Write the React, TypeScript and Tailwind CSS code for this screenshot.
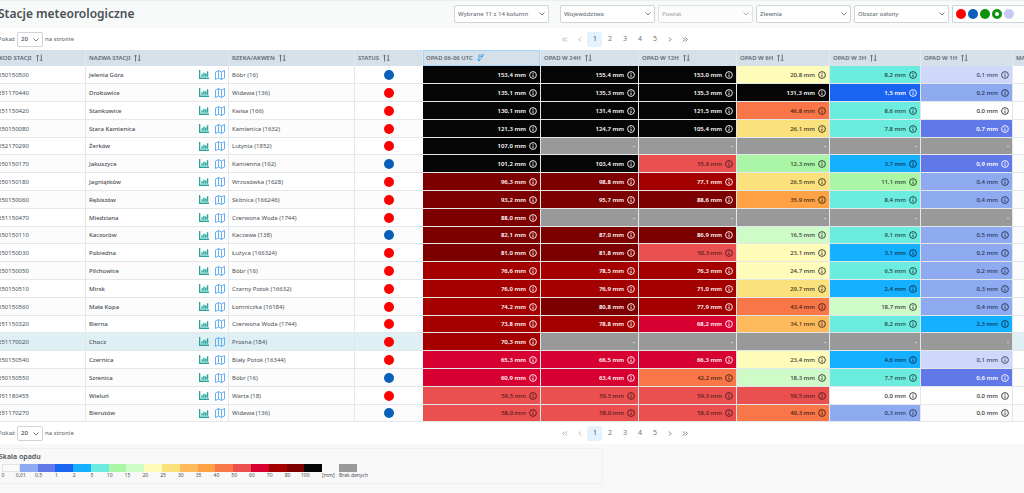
import { useState } from 'react';
import type { ReactNode } from 'react';

type Station = {
  code: string;
  name: string;
  river: string;
  status: 'red' | 'blue';
  values: string[];
};

const stations: Station[] = [
  { code: '250150500', name: 'Jelenia Góra', river: 'Bóbr (16)', status: 'blue', values: ['153,4', '155,4', '153,0', '20,8', '8,2', '0,1'] },
  { code: '251170440', name: 'Drołtowice', river: 'Widawa (136)', status: 'red', values: ['135,1', '135,3', '135,3', '131,3', '1,5', '0,2'] },
  { code: '251150420', name: 'Stankowice', river: 'Kwisa (166)', status: 'red', values: ['130,1', '131,4', '121,5', '46,8', '8,6', '0,0'] },
  { code: '250150080', name: 'Stara Kamienica', river: 'Kamienica (1632)', status: 'red', values: ['121,3', '124,7', '105,4', '26,1', '7,8', '0,7'] },
  { code: '252170290', name: 'Żerków', river: 'Lutynia (1852)', status: 'red', values: ['107,0', '-', '-', '-', '-', '-'] },
  { code: '250150170', name: 'Jakuszyce', river: 'Kamienna (162)', status: 'blue', values: ['101,2', '103,4', '55,6', '12,3', '3,7', '0,9'] },
  { code: '250150180', name: 'Jagniątków', river: 'Wrzosówka (1628)', status: 'red', values: ['96,3', '98,8', '77,1', '26,5', '11,1', '0,4'] },
  { code: '250150060', name: 'Rębiszów', river: 'Skitnica (166246)', status: 'red', values: ['93,2', '95,7', '88,6', '35,9', '8,4', '0,4'] },
  { code: '251150470', name: 'Miedziana', river: 'Czerwona Woda (1744)', status: 'red', values: ['88,0', '-', '-', '-', '-', '-'] },
  { code: '250150110', name: 'Kaczorów', river: 'Kaczawa (138)', status: 'blue', values: ['82,1', '87,0', '86,9', '16,5', '9,1', '0,5'] },
  { code: '250150030', name: 'Pobiedna', river: 'Łużyca (166324)', status: 'red', values: ['81,0', '81,8', '50,3', '23,1', '3,1', '0,2'] },
  { code: '250150050', name: 'Pilchowice', river: 'Bóbr (16)', status: 'red', values: ['76,6', '78,5', '76,3', '24,7', '6,5', '0,2'] },
  { code: '250150510', name: 'Mirsk', river: 'Czarny Potok (16632)', status: 'red', values: ['76,0', '76,9', '71,0', '29,7', '2,4', '0,3'] },
  { code: '250150560', name: 'Mała Kopa', river: 'Łomniczka (16184)', status: 'red', values: ['74,2', '80,8', '77,9', '43,4', '18,7', '0,4'] },
  { code: '251150320', name: 'Bierna', river: 'Czerwona Woda (1744)', status: 'red', values: ['73,8', '78,8', '68,2', '34,1', '8,2', '2,3'] },
  { code: '251170020', name: 'Chocz', river: 'Prosna (184)', status: 'red', values: ['70,3', '-', '-', '-', '-', '-'] },
  { code: '250150540', name: 'Czernica', river: 'Biały Potok (16344)', status: 'red', values: ['65,3', '66,5', '66,3', '23,4', '4,6', '0,1'] },
  { code: '250150550', name: 'Szrenica', river: 'Bóbr (16)', status: 'blue', values: ['60,9', '63,4', '42,2', '18,3', '7,7', '0,6'] },
  { code: '351180455', name: 'Wieluń', river: 'Warta (18)', status: 'red', values: ['59,5', '59,5', '59,5', '59,5', '0,0', '0,0'] },
  { code: '251170270', name: 'Bierutów', river: 'Widawa (136)', status: 'blue', values: ['58,0', '58,0', '58,0', '40,3', '0,3', '0,0'] },
];

// lower bound of each class, highest first
const levels: [number, string][] = [
  [100, 'bg-[#050505] text-white font-semibold'],
  [80, 'bg-[#7d0000] text-white font-semibold'],
  [70, 'bg-[#a40000] text-white font-semibold'],
  [60, 'bg-[#d70030] text-white font-semibold'],
  [50, 'bg-[#eb5050] text-[#551c1c] font-medium'],
  [40, 'bg-[#f87648] text-[#45220f] font-medium'],
  [35, 'bg-[#ffa245] text-[#3a2814] font-medium'],
  [30, 'bg-[#ffba5c] text-[#3a2f1c] font-medium'],
  [25, 'bg-[#fbe17c] text-[#3a3520] font-medium'],
  [20, 'bg-[#fffcb9] text-[#333] font-medium'],
  [15, 'bg-[#cffbc9] text-[#333] font-medium'],
  [10, 'bg-[#aaf5a6] text-[#2c3a2c] font-medium'],
  [5, 'bg-[#6becdf] text-[#1f3b39] font-medium'],
  [2, 'bg-[#15b0ff] text-[#0a2f45] font-medium'],
  [1, 'bg-[#1a64f2] text-white font-semibold'],
  [0.5, 'bg-[#6178e8] text-white font-semibold'],
  [0.15, 'bg-[#8eaaf0] text-[#2b3654] font-medium'],
  [0.01, 'bg-[#ced8fa] text-[#3f4558] font-medium'],
];

function levelClass(value: string, hourly: boolean) {
  if (value === '-') return 'bg-[#999999] text-white font-semibold';
  const n = parseFloat(value.replace(',', '.'));
  if (hourly && n === 0.5) return 'bg-[#8eaaf0] text-[#2b3654] font-medium';
  const level = levels.find(([min]) => n >= min);
  return level ? level[1] : 'text-[#333] font-medium';
}

const scale = [
  { label: '0', color: 'bg-[#fafafa]' },
  { label: '0,01', color: 'bg-[#8eaaf0]' },
  { label: '0,5', color: 'bg-[#6178e8]' },
  { label: '1', color: 'bg-[#1a64f2]' },
  { label: '2', color: 'bg-[#15b0ff]' },
  { label: '5', color: 'bg-[#6becdf]' },
  { label: '10', color: 'bg-[#aaf5a6]' },
  { label: '15', color: 'bg-[#cffbc9]' },
  { label: '20', color: 'bg-[#fffcb9]' },
  { label: '25', color: 'bg-[#fbe17c]' },
  { label: '30', color: 'bg-[#ffba5c]' },
  { label: '35', color: 'bg-[#ffa245]' },
  { label: '40', color: 'bg-[#f87648]' },
  { label: '50', color: 'bg-[#eb5050]' },
  { label: '60', color: 'bg-[#d70030]' },
  { label: '70', color: 'bg-[#a40000]' },
  { label: '80', color: 'bg-[#7d0000]' },
  { label: '100', color: 'bg-[#050505]' },
];

const columns = [
  { label: 'KOD STACJI', width: 'w-[90px]' },
  { label: 'NAZWA STACJI', width: 'w-[143px]' },
  { label: 'RZEKA/AKWEN', width: 'w-[126px]' },
  { label: 'STATUS', width: 'w-[68px]' },
  { label: 'OPAD 06-06 UTC', width: 'w-[118px]', sorted: true },
  { label: 'OPAD W 24H', width: 'w-[98px]' },
  { label: 'OPAD W 12H', width: 'w-[98px]' },
  { label: 'OPAD W 6H', width: 'w-[93px]' },
  { label: 'OPAD W 3H', width: 'w-[91px]' },
  { label: 'OPAD W 1H', width: 'w-[92px]' },
];

function SortIcon() {
  return (
    <svg viewBox="0 0 14 16" className="w-[7px] h-2 shrink-0" fill="none" stroke="currentColor" strokeWidth="1.8">
      <path d="M3 15V2M1 4.5l2-2.5 2.5 2.5M10.5 1v13M8 11.5l2.5 2.5 2.5-2.5" />
    </svg>
  );
}

function SortDescIcon() {
  return (
    <svg viewBox="0 0 14 16" className="w-[7px] h-2 shrink-0 text-[#2196f3]" fill="none" stroke="currentColor" strokeWidth="1.8">
      <path d="M4 1v13M1 11l3 3 3-3M7 2h7M7 5h5M7 8h3" />
    </svg>
  );
}

function ChartIcon() {
  return (
    <svg viewBox="0 0 20 18" className="w-[10px] h-[9px]" fill="currentColor">
      <path d="M0 0h2.6v15H20v3H0zM4.8 8.5h2.8v5H4.8zM8.5 5.5h2.8v8H8.5zM12.1 7h2.8v6.5h-2.8zM15.7 2.5h2.8v11h-2.8z" />
    </svg>
  );
}

function MapIcon() {
  return (
    <svg viewBox="0 0 20 20" className="w-[10px] h-[10px]" fill="none" stroke="currentColor" strokeWidth="2" strokeLinejoin="round">
      <path d="M1 4l6-3 6 3 6-3v15l-6 3-6-3-6 3zM7 1v15M13 4v15" />
    </svg>
  );
}

function InfoIcon() {
  return (
    <svg viewBox="0 0 16 16" className="w-2 h-2 shrink-0" fill="none" stroke="currentColor" strokeWidth="1.8">
      <circle cx="8" cy="8" r="6.8" />
      <path d="M8 7v5M8 3.8v1.8" />
    </svg>
  );
}

function Chevron() {
  return (
    <svg viewBox="0 0 12 8" className="absolute right-1 top-1/2 -translate-y-1/2 w-[6px] h-1 pointer-events-none" fill="none" stroke="currentColor" strokeWidth="1.8">
      <path d="M1 1l5 5 5-5" />
    </svg>
  );
}

function Filter({ label, disabled }: { label: string; disabled?: boolean }) {
  return (
    <div className={`relative w-[95px] text-[#6c757d] ${disabled ? 'opacity-60' : ''}`}>
      <select
        aria-label={label}
        disabled={disabled}
        className="block w-full h-[18px] pl-[3px] pr-3 appearance-none rounded-xs border border-[#ced4da] bg-white text-[6px] font-medium"
      >
        <option>{label}</option>
      </select>
      <Chevron />
    </div>
  );
}

function PageButton({ children, active, label, onClick }: { children: ReactNode; active?: boolean; label: string; onClick: () => void }) {
  return (
    <button
      aria-label={label}
      onClick={onClick}
      className={`w-[15px] h-[15px] flex items-center justify-center rounded-xs text-[7px] ${active ? 'bg-[#e3f2fd] text-[#495057]' : ''}`}
    >
      {children}
    </button>
  );
}

function Arrows({ d, dim }: { d: string; dim?: boolean }) {
  return (
    <svg viewBox="0 0 12 10" className={`w-[6px] h-[5px] ${dim ? 'opacity-60' : ''}`} fill="none" stroke="currentColor" strokeWidth="1.8">
      <path d={d} />
    </svg>
  );
}

function Paginator() {
  const [page, setPage] = useState(1);

  return (
    <div className="flex items-center h-[22px] pt-px bg-white text-[6px] text-[#6c757d]">
      <label className="flex items-center gap-[2px] w-[55%] pl-[2px] font-medium">
        Pokaż
        <span className="relative w-[26px]">
          <select className="block w-full h-[15px] pl-[3px] appearance-none rounded-xs border border-[#ced4da] bg-white text-[#495057]">
            <option>20</option>
          </select>
          <Chevron />
        </span>
        na stronie
      </label>
      <nav className="flex -ml-1">
        <PageButton label="Pierwsza" onClick={() => setPage(1)}><Arrows dim d="M5 1L1 5l4 4M10 1L6 5l4 4" /></PageButton>
        <PageButton label="Poprzednia" onClick={() => setPage(Math.max(1, page - 1))}><Arrows dim d="M8 1L4 5l4 4" /></PageButton>
        {[1, 2, 3, 4, 5].map(n => (
          <PageButton key={n} label={`${n}`} active={n === page} onClick={() => setPage(n)}>{n}</PageButton>
        ))}
        <PageButton label="Następna" onClick={() => setPage(Math.min(5, page + 1))}><Arrows d="M4 1l4 4-4 4" /></PageButton>
        <PageButton label="Ostatnia" onClick={() => setPage(5)}><Arrows d="M2 1l4 4-4 4M7 1l4 4-4 4" /></PageButton>
      </nav>
    </div>
  );
}

function StationTable() {
  return (
    <table className="w-full table-fixed border-separate border-spacing-0 text-[6px] leading-[10px] text-[#495057] whitespace-nowrap">
      <colgroup>
        {columns.map(c => <col key={c.label} className={c.width} />)}
        <col />
      </colgroup>
      <thead>
        <tr className="h-4 bg-[#d6e0e9] text-left text-[#5f6870]">
          {columns.map(c => (
            <th key={c.label} className={`p-0 pl-[3px] font-semibold border-r border-r-[#e4e9ee] ${c.sorted ? 'shadow-[inset_0_0_0_1px_#a6d5fa]' : ''}`}>
              <span className="flex items-center gap-1">
                {c.label}
                {c.sorted ? <SortDescIcon /> : <SortIcon />}
              </span>
            </th>
          ))}
          <th className="p-0 pl-[3px] font-semibold">MA</th>
        </tr>
      </thead>
      <tbody>
        {stations.map(s => (
          <tr
            key={s.code}
            className={`h-[18px] nth-[5n]:h-[17px] *:p-0 *:border-b *:border-[#e4e7ea] ${s.name === 'Chocz' ? 'bg-[#dff0f5]' : 'bg-white even:bg-[#fcfcfc]'}`}
          >
            <td className="border-r"><span className="pl-[2px]">{s.code}</span></td>
            <td className="border-r">
              <div className="flex items-center pl-[3px] pr-[3px] font-medium">
                <span className="flex-1">{s.name}</span>
                <span className="flex items-center gap-[6px]">
                  <a href="#wykres" aria-label="Wykres" className="text-[#26a69a]"><ChartIcon /></a>
                  <a href="#mapa" aria-label="Mapa" className="text-[#64b0f6]"><MapIcon /></a>
                </span>
              </div>
            </td>
            <td className="border-r"><span className="pl-[3px]">{s.river}</span></td>
            <td>
              <span className={`block mx-auto w-[10px] h-[10px] rounded-full ${s.status === 'red' ? 'bg-[#ff0000]' : 'bg-[#0a5fb8]'}`} />
            </td>
            {s.values.map((v, i) => (
              <td key={i} className={`border-r ${levelClass(v, i === 5)}`}>
                <span className="flex items-center justify-end gap-[3px] pr-[3px]">
                  {v === '-' ? v : <>{v} mm <InfoIcon /></>}
                </span>
              </td>
            ))}
            <td />
          </tr>
        ))}
      </tbody>
    </table>
  );
}

function Legend() {
  return (
    <section className="mt-1 w-[59%] border border-[#f0f0f0] pt-[2px] pb-[5px] text-[#495057]">
      <h2 className="pl-[2px] text-[7px] leading-3 font-semibold">Skala opadu</h2>
      <div className="flex items-start pl-[5px] pt-px text-[5px] leading-[6px]">
        <div className="flex w-80">
          {scale.map(s => (
            <div key={s.label} className="flex-1 min-w-0">
              <div className={`h-2 ${s.color} ${s.label === '0' ? 'border border-[#e4e4e4]' : ''}`} />
              <div className="w-[2px] flex justify-center">{s.label}</div>
            </div>
          ))}
        </div>
        <div className="w-[17px] pt-2">[mm]</div>
        <div>
          <div className="h-2 w-[18px] bg-[#999999]" />
          <div>Brak danych</div>
        </div>
      </div>
    </section>
  );
}

export default function App() {
  return (
    <div className="min-h-screen overflow-hidden bg-[#f8f8f8] font-['Noto_Sans','Open_Sans',sans-serif]">
      <div className="-ml-1">
        <header className="flex items-center justify-between h-[28px] pb-px border-t border-[#eceff1] bg-[#f8f9f9]">
          <h1 className="pl-[2px] text-[12px] font-semibold text-[#495057]">Stacje meteorologiczne</h1>
          <div className="flex gap-[3px]">
            <div className="mr-2"><Filter label="Wybrane 11 z 14 kolumn" /></div>
            <Filter label="Województwo" />
            <Filter label="Powiat" disabled />
            <Filter label="Zlewnia" />
            <Filter label="Obszar osłony" />
            <button aria-label="Status" className="flex items-center gap-[2px] w-[72px] h-[18px] pl-[3px] border border-r-0 border-[#ced4da] rounded-l-xs bg-white">
              <span className="w-[10px] h-[10px] rounded-full bg-[#ff0000]" />
              <span className="w-[10px] h-[10px] rounded-full bg-[#0a5fb8]" />
              <span className="w-[10px] h-[10px] rounded-full bg-[#0f930f]" />
              <span className="w-[10px] h-[10px] rounded-full border-3 border-[#0f930f]" />
              <span className="w-[10px] h-[10px] rounded-full bg-[#c5cbf5]" />
            </button>
          </div>
        </header>
        <Paginator />
        <StationTable />
        <Paginator />
        <Legend />
      </div>
    </div>
  );
}
